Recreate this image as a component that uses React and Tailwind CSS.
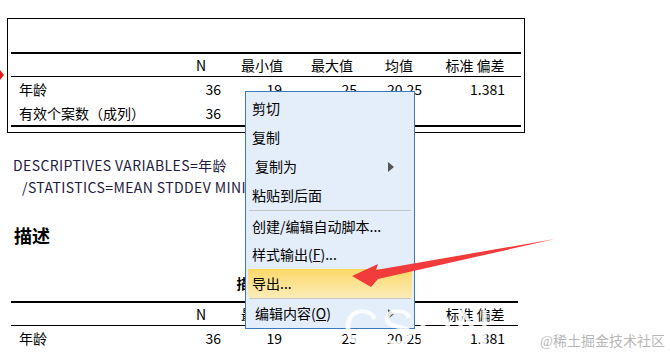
import React from "react";

const font = { fontFamily: '"Noto Sans CJK SC", "Noto Sans", sans-serif' };

const cols = "grid grid-cols-[165px_50px_72px_68px_66px_86px]";

const HeaderRow = () => (
  <div className={`${cols} h-[22px] items-center text-[14px] text-black`}>
    <div></div>
    <div className="text-center">N</div>
    <div className="text-center">最小值</div>
    <div className="text-center">最大值</div>
    <div className="text-center">均值</div>
    <div className="text-center">标准 偏差</div>
  </div>
);

const DataRow = ({ label, n, min, max, mean, sd, h = "h-[24px]" }) => (
  <div className={`${cols} ${h} items-center text-[14px] text-black`}>
    <div className="pl-[8px]">{label}</div>
    <div className="text-right pr-[5px]">{n}</div>
    <div className="text-right pr-[16px]">{min}</div>
    <div className="text-right pr-[9px]">{max}</div>
    <div className="text-right pr-[10px]">{mean}</div>
    <div className="text-right pr-[13px]">{sd}</div>
  </div>
);

const SubArrow = () => (
  <svg width="6" height="10" viewBox="0 0 6 10" className="absolute right-[18px] top-1/2 -translate-y-1/2">
    <polygon points="0,0 6,5 0,10" fill="#555" />
  </svg>
);

const MenuItem = ({ children, h = "h-[29px]", sub, active, indent }) => (
  <div
    className={`relative flex items-center ${h} mx-[2px] ${indent ? "pl-[7px]" : "pl-[4px]"} text-[14px] text-black ${
      active ? "bg-gradient-to-b from-[#fdd865] to-[#fcecb8]" : ""
    }`}
  >
    {children}
    {sub && <SubArrow />}
  </div>
);

const Sep = ({ my = "my-px" }) => <div className={`mx-[3px] h-px bg-[#c6c6c6] ${my}`}></div>;

export default function App() {
  return (
    <div className="relative w-[670px] h-[355px] overflow-hidden bg-white" style={font}>
      {/* red marker on the left edge */}
      <svg width="5" height="10" viewBox="0 0 5 10" className="absolute left-0 top-[70px]">
        <polygon points="0,0 4,5 0,10" fill="#e81818" />
      </svg>

      {/* first output table */}
      <div className="ml-[7px] mt-[18px] w-[518px] border border-black px-[3px] pb-[5px]">
        <div className="h-[33px]"></div>
        <div className="h-[2px] bg-black"></div>
        <HeaderRow />
        <div className="h-px bg-black"></div>
        <DataRow label="年龄" n="36" min="19" max="25" mean="20.25" sd="1.381" />
        <DataRow label="有效个案数（成列）" n="36" min="" max="" mean="" sd="" />
        <div className="h-[2px] bg-black"></div>
      </div>

      {/* syntax */}
      <div className="mt-[21px] pl-[13px] text-[14px] leading-[22px] tracking-[0.4px] text-[#1d1b40]">
        <div>DESCRIPTIVES VARIABLES=年龄</div>
        <div className="pl-[9px]">/STATISTICS=MEAN STDDEV MINIMUM MAXIMUM</div>
      </div>

      <div className="mt-[25px] pl-[14px] text-[18px] leading-[24px] font-bold text-black">描述</div>

      {/* second output table */}
      <div className="ml-[11px] w-[507px]">
        <div className="mt-[26px] h-[20px] leading-[20px] text-center text-[14px] font-bold text-black">描述统计</div>
        <div className="mt-[8px] h-[2px] bg-black"></div>
        <HeaderRow />
        <div className="h-px bg-black"></div>
        <DataRow label="年龄" n="36" min="19" max="25" mean="20.25" sd="1.381" />
      </div>

      {/* context menu */}
      <div className="absolute left-[245px] top-[91px] w-[170px] border border-[#3b78be] bg-[#e4eefa] pt-[2px]">
        <MenuItem>剪切</MenuItem>
        <MenuItem>复制</MenuItem>
        <MenuItem sub indent>复制为</MenuItem>
        <MenuItem h="h-[28px]">粘贴到后面</MenuItem>
        <Sep />
        <MenuItem h="h-[28px]">创建/编辑自动脚本...</MenuItem>
        <MenuItem>
          样式输出(<span className="underline">F</span>)...
        </MenuItem>
        <MenuItem active>导出...</MenuItem>
        <Sep my="my-0" />
        <MenuItem sub indent>
          编辑内容(<span className="underline">O</span>)
        </MenuItem>
      </div>

      {/* red annotation arrow */}
      <svg width="670" height="355" viewBox="0 0 670 355" className="absolute left-0 top-0 pointer-events-none">
        <polygon points="352,276 378,264 376,270 555,239 378,279 371,287" fill="#f23b3b" />
      </svg>

      {/* watermarks */}
      <div className="absolute left-[343px] top-[298px] text-[50px] leading-[60px] text-white opacity-85 tracking-[2px]" style={{ fontFamily: '"Liberation Sans", sans-serif' }}>
        CSDN
      </div>
      <div className="absolute left-[540px] top-[333px] text-[14px] leading-[18px] text-[#b8b8b8]" style={{ fontFamily: '"Liberation Serif", "Noto Sans CJK SC", serif' }}>
        @稀土掘金技术社区
      </div>
    </div>
  );
}
